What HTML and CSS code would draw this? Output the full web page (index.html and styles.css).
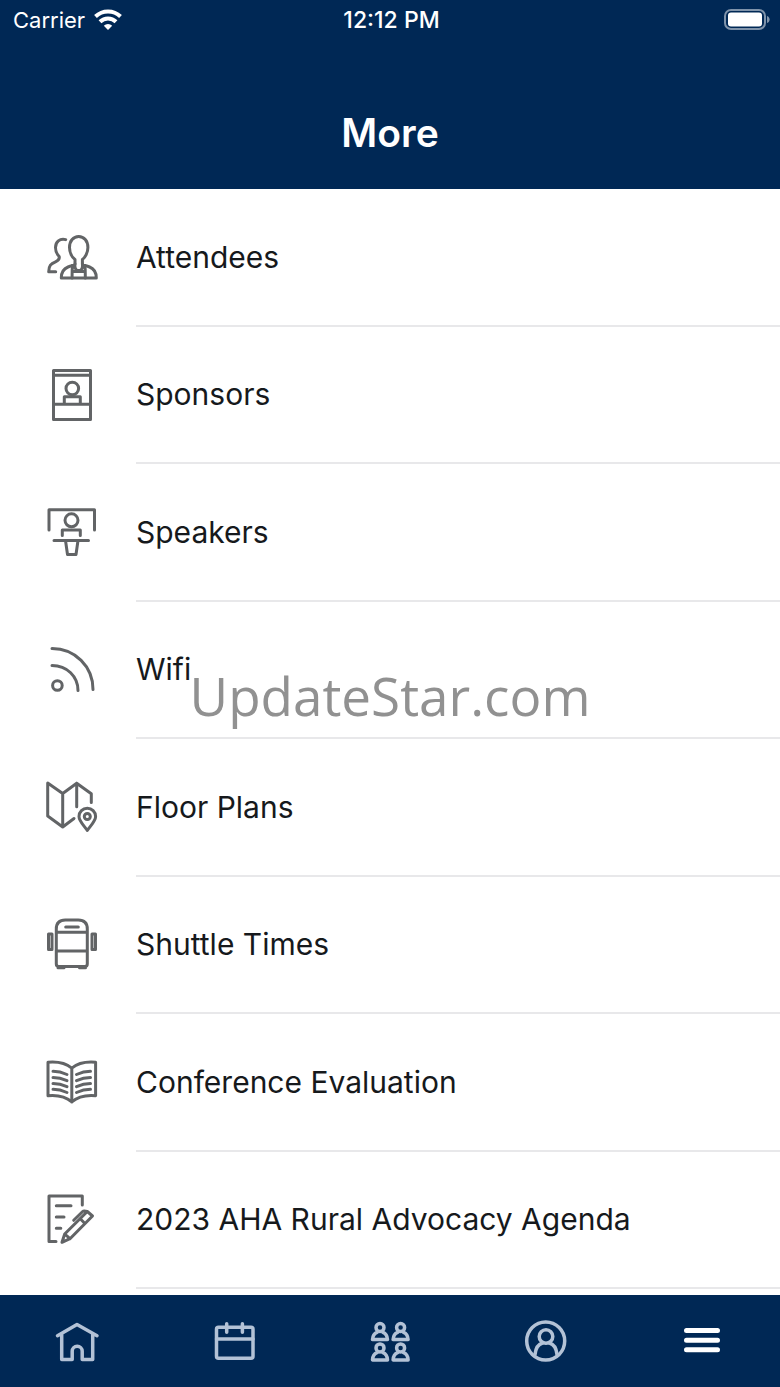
FILE: index.html
```html
<!DOCTYPE html>
<html lang="en">
  <head>
    <meta charset="UTF-8" />
    <meta name="viewport" content="width=device-width, initial-scale=1.0" />
    <title>More</title>
    <link rel="stylesheet" href="styles.css">
  </head>
  <body>
    <header class="header">
      <div class="status-bar">
        <div class="carrier">
          <span>Carrier</span>
          <svg class="signal" viewBox="0 0 28 22" aria-hidden="true">
            <path d="M1.500 7.500a18 18 0 0 1 25 0" />
            <path d="M6 12.800a11.500 11.500 0 0 1 16 0" />
            <path class="solid" d="M14 21l-4.200-4.300a6 6 0 0 1 8.400 0z" />
          </svg>
        </div>
        <time class="clock">12:12 PM</time>
        <svg class="battery" viewBox="0 0 46 22" aria-hidden="true">
          <rect class="shell" x="1" y="1" width="40" height="19" rx="6" />
          <rect class="charge" x="4" y="3.500" width="34" height="14" rx="3" />
          <path class="cap" d="M43 7c3.500 1 3.500 6 0 7z" />
        </svg>
      </div>
      <h1 class="title">More</h1>
    </header>

    <main class="menu">
      <a class="row" href="#attendees">
        <svg class="icon" viewBox="0 0 56 56" aria-hidden="true">
          <path d="M31 34v-4.500c-3-2-5.500-7-5.500-12 0-6.500 3.900-11 9.200-11s9.200 4.500 9.200 11c0 5-2.700 10-5.500 12V34l3.600 1.600 3.600 1.400c4 1.600 6.700 4 6.700 11H17.300c0-7 2.700-9.400 6.700-11l3.600-1.400z" />
          <path d="M31 34c-.4 3 .6 5.500 2.200 6.500h3c1.600-1 2.600-3.500 2.200-6.500M28.400 36.500c-.4 4-.3 8-.3 11.500M41 36.500c.4 4 .3 8 .3 11.500M29 41.500h12" />
          <path d="M21.700 9.600c-6-1.600-10.200 2.500-10.200 8 0 4 1.200 6.500 3.700 8.900.6 3-1 4.200-3.700 5.300-4.500 1.900-6.800 3.500-6.800 9.900h7" />
        </svg>
        <span class="label">Attendees</span>
      </a>
      <a class="row" href="#sponsors">
        <svg class="icon" viewBox="0 0 56 56" aria-hidden="true">
          <path d="M9.500 3.500h37v49h-37zM9.500 8.300h37M9.500 37.300h37M20.300 37.300v-7.500h16v7.500" />
          <circle cx="28.300" cy="21.500" r="6.300" />
        </svg>
        <span class="label">Sponsors</span>
      </a>
      <a class="row" href="#speakers">
        <svg class="icon" viewBox="0 0 56 56" aria-hidden="true">
          <path d="M5 25V4.700h45.500V25M18.300 30.500V25h18v5.500M10 35.500h34.500M21.500 35.500l2 14h8.500l2-14" />
          <circle cx="27.500" cy="15.300" r="6.500" />
        </svg>
        <span class="label">Speakers</span>
      </a>
      <a class="row" href="#wifi">
        <svg class="icon" viewBox="0 0 56 56" aria-hidden="true">
          <path d="M8 6.500c23 0 41 18 41 41M8 23.500c15 0 26 11 26 25" />
          <circle cx="13.400" cy="43.500" r="4.800" />
        </svg>
        <span class="label">Wifi</span>
      </a>
      <a class="row" href="#floor-plans">
        <svg class="icon" viewBox="0 0 56 56" aria-hidden="true">
          <path d="M30 38.500L18.700 47 3.700 36V3l15 10.500 14-10.300 14.600 10.500v8.800M18.700 13.500V47M32.700 3.200v23.500" />
          <path d="M43.300 50.500c-3.500-5-8.300-9.500-8.300-14a8.300 8.300 0 0 1 16.600 0c0 4.500-4.800 9-8.300 14z" />
          <circle cx="43.300" cy="36.500" r="3" />
        </svg>
        <span class="label">Floor Plans</span>
      </a>
      <a class="row" href="#shuttle-times">
        <svg class="icon" viewBox="0 0 56 56" aria-hidden="true">
          <path d="M12.300 12q0-9 9-9h13q9 0 9 9v35q0 2.500-2.500 2.500h-26q-2.500 0-2.500-2.500zM12.300 15.300h31M12.300 34h31M21.700 10h12.600M4.500 17h3.500v15.500H4.500zM48 17h3.500v15.500H48zM14 50.800h6M35.500 50.800h6" />
        </svg>
        <span class="label">Shuttle Times</span>
      </a>
      <a class="row" href="#conference-evaluation">
        <svg class="icon" viewBox="0 0 56 56" aria-hidden="true">
          <path d="M27.800 13.200C21 7.500 13 6.500 4 7.300v33.400c9-.8 17 .2 23.800 6.300 6.800-6.100 14.800-7.100 23.800-6.300V7.300c-9-.8-17 .2-23.800 5.900zV47" />
          <path d="M9 16.300q7 0 14 3.200M9 22.500q7 0 14 3.200M9 28.500q7 0 14 3.200M9 34.300q7 0 14 3.200M46.500 16.300q-7 0-14 3.200M46.500 22.500q-7 0-14 3.200M46.500 28.500q-7 0-14 3.200M46.500 34.300q-7 0-14 3.200" />
        </svg>
        <span class="label">Conference Evaluation</span>
      </a>
      <a class="row" href="#agenda">
        <svg class="icon" viewBox="0 0 56 56" aria-hidden="true">
          <path d="M12 49.500H5V4h33.300v9M12.300 13.700H27M12.300 25H20M12.300 36.300h4.500" />
          <path d="M18 50.300l2.700-8.300 22.600-22.500 5.200 4.500L26 46.700zM20.700 42l5.300 4.700M36 26.500l4.700 4.700M29.700 28.300l9-8.800q1-1 4.600 0" />
        </svg>
        <span class="label">2023 AHA Rural Advocacy Agenda</span>
      </a>
    </main>

    <nav class="tab-bar" aria-label="Main">
      <button class="tab" type="button" aria-label="Home">
        <svg class="tab-icon" viewBox="0 0 48 48" aria-hidden="true">
          <path d="M3.500 18.700L23 7.500l20 11.200M7.700 17v25.500h10.500v-8.200a5 5 0 0 1 10 0v8.200h10.500V17" />
        </svg>
      </button>
      <button class="tab" type="button" aria-label="Schedule">
        <svg class="tab-icon" viewBox="0 0 48 48" aria-hidden="true">
          <rect x="6.500" y="10.300" width="36.500" height="31" rx="2" />
          <path d="M6.500 22H43M16.700 6.800v8.500M32.400 6.800v8.500" />
        </svg>
      </button>
      <button class="tab" type="button" aria-label="Groups">
        <svg class="tab-icon" viewBox="0 0 48 48" aria-hidden="true">
          <defs>
            <g id="person">
              <circle cx="14" cy="10.500" r="4" />
              <path d="M11 15.300c-3 1.200-4.300 4-4.500 7.200h15c-.2-3.200-1.500-6-4.500-7.200" />
            </g>
          </defs>
          <use href="#person" />
          <use href="#person" x="20.600" />
          <use href="#person" y="20.400" />
          <use href="#person" x="20.600" y="20.400" />
        </svg>
      </button>
      <button class="tab" type="button" aria-label="Profile">
        <svg class="tab-icon" viewBox="0 0 48 48" aria-hidden="true">
          <circle cx="23.700" cy="24" r="19" />
          <circle cx="24" cy="19.500" r="6.800" />
          <path d="M13 37.500c.7-6.500 4-10.500 7.500-11.500M35 37.500c-.7-6.500-4-10.500-7.500-11.500" />
        </svg>
      </button>
      <button class="tab active" type="button" aria-label="More" aria-current="page">
        <svg class="tab-icon" viewBox="0 0 48 48" aria-hidden="true">
          <path d="M8.500 13.400h31M8.500 23.300h31M8.500 32.700h31" />
        </svg>
      </button>
    </nav>

    <div class="watermark">UpdateStar.com</div>
  </body>
</html>
```
FILE: styles.css
```css
* {
  box-sizing: border-box;
}

body {
  display: flex;
  flex-direction: column;
  min-height: 100vh;
  margin: 0;
  position: relative;
  background-color: #fff;
  color: #16191c;
  font-family: Inter, "Liberation Sans", sans-serif;
}

/* Header */
.header {
  padding-bottom: 12px;
  background-color: #002855;
  color: #fff;
}

.status-bar {
  display: grid;
  grid-template-columns: 1fr auto 1fr;
  align-items: center;
  height: 39px;
  margin-bottom: 50px;
  padding: 0 10px 0 13px;
  font-size: 22px;
}

.carrier {
  display: flex;
  align-items: center;
  gap: 9px;
}

.signal {
  width: 28px;
  height: 22px;
  fill: none;
  stroke: #fff;
  stroke-width: 4;
}

.signal .solid {
  fill: #fff;
  stroke: none;
}

.clock {
  font-size: 23px;
  font-weight: 500;
}

.battery {
  width: 46px;
  height: 22px;
  justify-self: end;
  fill: #fff;
}

.battery .shell {
  fill: none;
  stroke: #7f93aa;
  stroke-width: 2;
}

.battery .cap {
  fill: #7f93aa;
}

.title {
  margin: 0;
  font-size: 39px;
  font-weight: 600;
  line-height: 88px;
  text-align: center;
}

/* Menu list */
.menu {
  display: flex;
  flex-direction: column;
  flex: 1;
  padding-bottom: 6px;
}

.row {
  display: flex;
  flex: 1;
  align-items: center;
  gap: 36px;
  min-height: 88px;
  padding-left: 44px;
  color: inherit;
  font-size: 30px;
  text-decoration: none;
}

.icon {
  flex: none;
  width: 56px;
  height: 56px;
  fill: none;
  stroke: #626466;
  stroke-width: 3;
  stroke-linecap: round;
  stroke-linejoin: round;
}

.label {
  display: flex;
  flex: 1;
  align-items: center;
  align-self: stretch;
  border-bottom: 2px solid #e8e8ea;
}

/* Bottom tabs */
.tab-bar {
  display: flex;
  height: 92px;
  background-color: #002855;
}

.tab {
  display: flex;
  flex: 1;
  align-items: center;
  justify-content: center;
  padding: 0;
  border: none;
  background: none;
  color: #b3c2d6;
  cursor: pointer;
}

.tab.active {
  color: #fff;
}

.tab-icon {
  width: 48px;
  height: 48px;
  fill: none;
  stroke: currentColor;
  stroke-width: 3.5;
  stroke-linecap: round;
  stroke-linejoin: round;
}

.tab.active .tab-icon {
  stroke-width: 5;
}

.watermark {
  position: absolute;
  top: 50%;
  left: 0;
  right: 0;
  color: #919191;
  font-family: "Open Sans", "Noto Sans", sans-serif;
  font-size: 53px;
  line-height: 72px;
  margin-top: -34px;
  text-align: center;
  pointer-events: none;
}
```
